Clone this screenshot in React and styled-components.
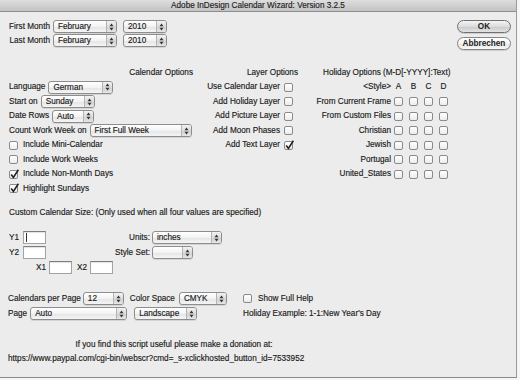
import React from "react";
import styled, { createGlobalStyle } from "styled-components";

const Global = createGlobalStyle`
  html, body { margin: 0; padding: 0; background: #f6f6f6; }
  body {
    font-family: "Liberation Sans", Arial, sans-serif;
    font-size: 8.2px;
    color: #1a1a1a;
    -webkit-text-stroke: 0.15px #1a1a1a;
  }
  * { box-sizing: border-box; }
`;

const Win = styled.div`
  width: 517px;
  height: 378px;
  background: #ececec;
  border-right: 1px solid #9a9a9a;
  border-bottom: 1px solid #8a8a8a;
  display: flex;
  flex-direction: column;
  overflow: hidden;
`;

const TitleBar = styled.div`
  height: 12px;
  flex: none;
  background: linear-gradient(#dedede, #c3c3c3);
  border-bottom: 1px solid #8e8e8e;
  display: flex;
  align-items: center;
  justify-content: center;
  font-size: 8.2px;
  line-height: 11px;
  color: #262626;
`;

const Body = styled.div`
  padding: 8px 5px 0 9px;
  display: flex;
  flex-direction: column;
`;

const Txt = styled.span`
  line-height: 12px;
  white-space: nowrap;
`;

const TopSection = styled.div`
  display: flex;
  justify-content: space-between;
  align-items: flex-start;
`;

const MonthGrid = styled.div`
  display: grid;
  grid-template-columns: 41px auto auto;
  column-gap: 3px;
  row-gap: 1px;
  align-items: center;
  & > :nth-child(3n) { margin-left: 3px; }
`;

const RightLabel = styled.span`
  text-align: right;
  white-space: nowrap;
  line-height: 12px;
`;

const ButtonCol = styled.div`
  display: flex;
  flex-direction: column;
  gap: 4px;
`;

const PillButton = styled.div`
  width: 54px;
  height: 13px;
  border-radius: 7px;
  border: 1px solid ${p => (p.$default ? "#6f6f6f" : "#858585")};
  background: ${p =>
    p.$default
      ? "linear-gradient(#f4f4f4, #dcdcdc 50%, #cacaca 51%, #e2e2e2)"
      : "linear-gradient(#ffffff, #f4f4f4 50%, #e6e6e6 51%, #f8f8f8)"};
  display: flex;
  align-items: center;
  justify-content: center;
  font-size: 8.2px;
  font-weight: bold;
  color: #222;
  -webkit-text-stroke: 0;
  box-shadow: 0 1px 0 rgba(0, 0, 0, 0.12);
`;

const PopupBox = styled.div`
  width: ${p => p.$w}px;
  height: 13px;
  border: 1px solid #8d8d8d;
  border-radius: 3px;
  background: linear-gradient(#ffffff, #f3f3f3 50%, #e4e4e4 51%, #f5f5f5);
  box-shadow: 0 1px 0 rgba(0, 0, 0, 0.1);
  display: flex;
  align-items: stretch;
  overflow: hidden;
  flex: none;
`;

const PopupText = styled.span`
  flex: 1;
  padding-left: 4px;
  line-height: 11px;
  white-space: nowrap;
  overflow: hidden;
`;

const Stepper = styled.span`
  width: 10px;
  flex: none;
  border-left: 1px solid #b4b4b4;
  background: linear-gradient(#f2f2f2, #dcdcdc 50%, #cfcfcf 51%, #e6e6e6);
  display: flex;
  align-items: center;
  justify-content: center;
`;

const Popup = ({ w, children }) => (
  <PopupBox $w={w}>
    <PopupText>{children}</PopupText>
    <Stepper>
      <svg width="5" height="8" viewBox="0 0 5 8">
        <path d="M0.5 3.2 L2.5 0.6 L4.5 3.2 Z" fill="#333" />
        <path d="M0.5 4.8 L2.5 7.4 L4.5 4.8 Z" fill="#333" />
      </svg>
    </Stepper>
  </PopupBox>
);

const CheckBox = styled.span`
  width: 9px;
  height: 9px;
  flex: none;
  border: 1px solid #8a8a8a;
  border-radius: 2px;
  background: linear-gradient(#ffffff, #ececec);
  position: relative;
  display: inline-block;
`;

const CheckMark = styled.svg`
  position: absolute;
  left: 0px;
  top: -2px;
`;

const Check = ({ on }) => (
  <CheckBox>
    {on && (
      <CheckMark width="9" height="10" viewBox="0 0 9 10">
        <path d="M1.2 5.6 L3.4 8.4 L8.4 0.8" stroke="#1e1e1e" strokeWidth="1.6" fill="none" />
      </CheckMark>
    )}
  </CheckBox>
);

const Options = styled.div`
  display: flex;
  margin-top: 17px;
`;

const Column = styled.div`
  display: flex;
  flex-direction: column;
  width: ${p => p.$w}px;
  margin-left: ${p => p.$ml || 0}px;
`;

const ColHeader = styled.div`
  height: 13px;
  line-height: 12px;
  white-space: nowrap;
  text-align: ${p => p.$align || "right"};
  padding-left: ${p => p.$pl || 0}px;
`;

const Row = styled.div`
  height: 14.5px;
  display: flex;
  align-items: center;
  gap: ${p => p.$gap ?? 3}px;
  justify-content: ${p => p.$justify || "flex-start"};
  padding-right: ${p => p.$pr || 0}px;
`;

const HolLabel = styled.span`
  width: 86px;
  text-align: right;
  white-space: nowrap;
  line-height: 12px;
  margin-right: 3px;
`;

const Boxes = styled.div`
  display: flex;
  gap: 6px;
`;

const Letter = styled.span`
  width: 9px;
  text-align: center;
  line-height: 12px;
`;

const SizeTitle = styled.div`
  margin-top: 11px;
  line-height: 12px;
  white-space: nowrap;
`;

const SizeArea = styled.div`
  margin-top: 12px;
  display: flex;
`;

const SizeLeft = styled.div`
  width: 104px;
  display: flex;
  flex-direction: column;
  gap: 2px;
`;

const SizeRow = styled.div`
  height: 13px;
  display: flex;
  align-items: center;
  padding-left: ${p => p.$pl || 0}px;
`;

const AxisLabel = styled.span`
  width: ${p => p.$w}px;
  line-height: 12px;
  white-space: nowrap;
`;

const TextField = styled.span`
  width: 23px;
  height: 13px;
  flex: none;
  background: #fff;
  border: 1px solid #a3a3a3;
  border-top-color: #7e7e7e;
  box-shadow: inset 0 1px 1px rgba(0, 0, 0, 0.12);
  display: flex;
  align-items: center;
  padding-left: 2px;
`;

const Caret = styled.span`
  width: 1px;
  height: 9px;
  background: #333;
`;

const SizeRight = styled.div`
  display: grid;
  grid-template-columns: 37px auto;
  column-gap: 2px;
  row-gap: 2px;
  align-items: center;
  align-content: start;
  justify-items: start;
  & > span:nth-child(odd) { justify-self: end; }
`;

const BottomGrid = styled.div`
  margin-top: 18px;
  display: grid;
  grid-template-columns: 235px auto;
  row-gap: 2px;
  margin-left: -1px;
`;

const BRow = styled.div`
  height: 13px;
  display: flex;
  align-items: center;
  gap: ${p => p.$gap ?? 3}px;
`;

const Spacer = styled.span`
  width: ${p => p.$w}px;
  flex: none;
`;

const Donation = styled.div`
  margin-top: 19px;
  width: 332px;
  margin-left: -1px;
  text-align: center;
  line-height: 12px;
  white-space: nowrap;
`;

const Url = styled.div`
  margin-top: 2px;
  margin-left: -1px;
  line-height: 12px;
  white-space: nowrap;
`;

const holidays = ["From Current Frame", "From Custom Files", "Christian", "Jewish", "Portugal", "United_States"];
const layers = [
  ["Use Calendar Layer", false],
  ["Add Holiday Layer", false],
  ["Add Picture Layer", false],
  ["Add Moon Phases", false],
  ["Add Text Layer", true],
];

export default function App() {
  return (
    <>
      <Global />
      <Win>
        <TitleBar>Adobe InDesign Calendar Wizard: Version 3.2.5</TitleBar>
        <Body>
          <TopSection>
            <MonthGrid>
              <RightLabel>First Month</RightLabel>
              <Popup w={64}>February</Popup>
              <Popup w={44}>2010</Popup>
              <RightLabel>Last Month</RightLabel>
              <Popup w={64}>February</Popup>
              <Popup w={44}>2010</Popup>
            </MonthGrid>
            <ButtonCol>
              <PillButton $default>OK</PillButton>
              <PillButton>Abbrechen</PillButton>
            </ButtonCol>
          </TopSection>

          <Options>
            <Column $w={184}>
              <ColHeader>Calendar Options</ColHeader>
              <Row>
                <Txt>Language</Txt>
                <Popup w={65}>German</Popup>
              </Row>
              <Row>
                <Txt>Start on</Txt>
                <Popup w={54}>Sunday</Popup>
              </Row>
              <Row>
                <Txt>Date Rows</Txt>
                <Popup w={42}>Auto</Popup>
              </Row>
              <Row>
                <Txt>Count Work Week on</Txt>
                <Popup w={102}>First Full Week</Popup>
              </Row>
              <Row $gap={5}>
                <Check />
                <Txt>Include Mini-Calendar</Txt>
              </Row>
              <Row $gap={5}>
                <Check />
                <Txt>Include Work Weeks</Txt>
              </Row>
              <Row $gap={5}>
                <Check on />
                <Txt>Include Non-Month Days</Txt>
              </Row>
              <Row $gap={5}>
                <Check on />
                <Txt>Highlight Sundays</Txt>
              </Row>
            </Column>

            <Column $w={105}>
              <ColHeader>Layer Options</ColHeader>
              {layers.map(([label, on]) => (
                <Row key={label} $justify="flex-end" $pr={5} $gap={4}>
                  <Txt>{label}</Txt>
                  <Check on={on} />
                </Row>
              ))}
            </Column>

            <Column $w={160} $ml={7}>
              <ColHeader $align="left" $pl={18}>Holiday Options (M-D[-YYYY]:Text)</ColHeader>
              <Row $gap={0}>
                <HolLabel>&lt;Style&gt;</HolLabel>
                <Boxes>
                  {["A", "B", "C", "D"].map(l => (
                    <Letter key={l}>{l}</Letter>
                  ))}
                </Boxes>
              </Row>
              {holidays.map(h => (
                <Row key={h} $gap={0}>
                  <HolLabel>{h}</HolLabel>
                  <Boxes>
                    <Check />
                    <Check />
                    <Check />
                    <Check />
                  </Boxes>
                </Row>
              ))}
            </Column>
          </Options>

          <SizeTitle>Custom Calendar Size: (Only used when all four values are specified)</SizeTitle>
          <SizeArea>
            <SizeLeft>
              <SizeRow>
                <AxisLabel $w={14}>Y1</AxisLabel>
                <TextField>
                  <Caret />
                </TextField>
              </SizeRow>
              <SizeRow>
                <AxisLabel $w={14}>Y2</AxisLabel>
                <TextField />
              </SizeRow>
              <SizeRow $pl={27}>
                <AxisLabel $w={13}>X1</AxisLabel>
                <TextField />
                <Spacer $w={5} />
                <AxisLabel $w={13}>X2</AxisLabel>
                <TextField />
              </SizeRow>
            </SizeLeft>
            <SizeRight>
              <Txt>Units:</Txt>
              <Popup w={70}>inches</Popup>
              <Txt>Style Set:</Txt>
              <Popup w={41}></Popup>
            </SizeRight>
          </SizeArea>

          <BottomGrid>
            <BRow $gap={2}>
              <Txt>Calendars per Page</Txt>
              <Popup w={41}>12</Popup>
              <Spacer $w={2} />
              <Txt>Color Space</Txt>
              <Spacer $w={0} />
              <Popup w={48}>CMYK</Popup>
            </BRow>
            <BRow $gap={6}>
              <Check />
              <Txt>Show Full Help</Txt>
            </BRow>
            <BRow $gap={3}>
              <Txt>Page</Txt>
              <Popup w={97}>Auto</Popup>
              <Spacer $w={1} />
              <Popup w={63}>Landscape</Popup>
            </BRow>
            <BRow>
              <Txt>Holiday Example: 1-1:New Year's Day</Txt>
            </BRow>
          </BottomGrid>

          <Donation>If you find this script useful please make a donation at:</Donation>
          <Url>https://www.paypal.com/cgi-bin/webscr?cmd=_s-xclickhosted_button_id=7533952</Url>
        </Body>
      </Win>
    </>
  );
}
